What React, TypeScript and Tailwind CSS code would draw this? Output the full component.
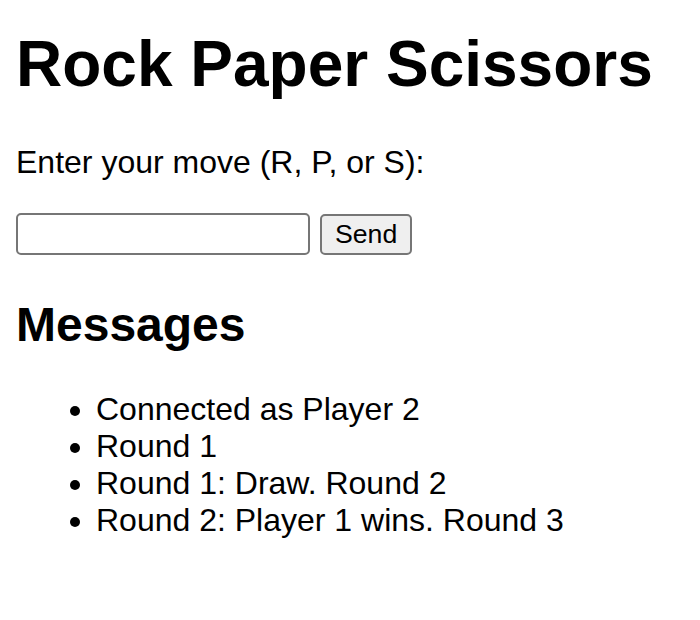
import React from "react";

export default function App() {
  const messages = [
    "Connected as Player 2",
    "Round 1",
    "Round 1: Draw. Round 2",
    "Round 2: Player 1 wins. Round 3",
  ];
  return (
    <div className="min-h-[620px] bg-white px-4 pt-[27px] font-['Liberation_Sans',Arial,Helvetica,sans-serif] text-[32px] leading-[normal] text-black">
      <h1 className="mb-[43px] text-[64px] font-bold">Rock Paper Scissors</h1>
      <p>Enter your move (R, P, or S):</p>
      <div className="mt-8 flex items-start gap-[10px]">
        <input
          type="text"
          className="box-border h-[42px] w-[294px] rounded-[5px] border-2 border-[#767676] bg-white px-1 text-[26.67px] outline-none"
        />
        <button className="mt-px box-border h-[41px] rounded-[5px] border-2 border-[#767676] bg-[#efefef] px-[13px] text-[26.67px] leading-[normal] text-black">
          Send
        </button>
      </div>
      <h2 className="mt-[42px] mb-[39px] text-[48px] font-bold">Messages</h2>
      <ul className="list-disc pl-[80px]">
        {messages.map((m) => (
          <li key={m}>{m}</li>
        ))}
      </ul>
    </div>
  );
}
